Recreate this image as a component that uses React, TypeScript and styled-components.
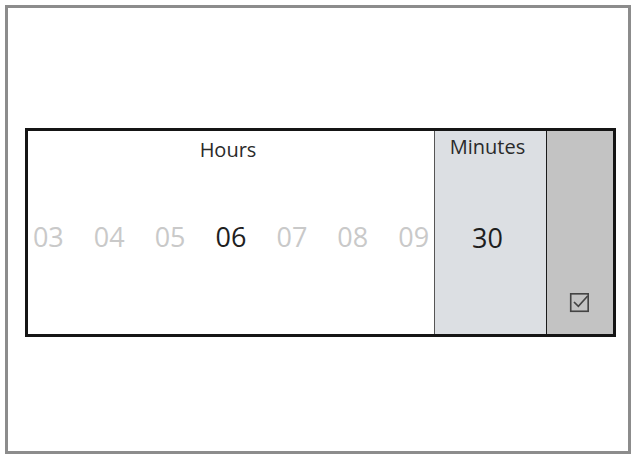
import styled, { createGlobalStyle } from "styled-components";

const GlobalStyle = createGlobalStyle`
    html, body {
        margin: 0;
        padding: 0;
        background: #ffffff;
        font-family: "Open Sans", "Noto Sans", sans-serif;
    }
`

const Frame = styled.div`
    box-sizing: border-box;
    margin: 5px 0 0 5px;
    width: 626px;
    height: 449px;
    border: 3px solid #8c8c8c;
    display: flex;
    align-items: flex-start;
    padding: 120px 12px 0 17px;
`

const Picker = styled.div`
    box-sizing: border-box;
    width: 591px;
    height: 209px;
    border: 3px solid #151515;
    display: flex;
    background: #ffffff;
`

const Column = styled.div<{ width: number, bg: string, divider?: string }>`
    box-sizing: border-box;
    width: ${props => props.width}px;
    flex: none;
    display: flex;
    flex-direction: column;
    align-items: center;
    background: ${props => props.bg};
    ${props => props.divider && `border-right: 1px solid ${props.divider};`}
`

const Label = styled.div<{ top: number }>`
    padding-top: ${props => props.top}px;
    padding-right: 6px;
    font-size: 20px;
    line-height: 24px;
    color: #2a2a2a;
`

const NumberRow = styled.div<{ top: number, shift?: number }>`
    margin-top: ${props => props.top}px;
    padding-right: ${props => props.shift || 0}px;
    display: flex;
    justify-content: center;
    gap: 30px;
`

const Num = styled.span<{ active?: boolean }>`
    font-size: 27px;
    line-height: 32px;
    color: ${props => props.active ? "#1e1e1e" : "#c9c9c9"};
`

const ConfirmColumn = styled.div`
    flex: 1;
    display: flex;
    justify-content: center;
    align-items: flex-end;
    padding-bottom: 20px;
    background: #c3c3c3;
`

const CheckIcon = () => (
    <svg width="24" height="24" viewBox="0 0 22 22" fill="none" stroke="#444" strokeWidth="1.5">
        <rect x="2.5" y="3.5" width="16" height="16" />
        <path d="M6 11.5 L9.5 15 L17.5 6" strokeLinecap="square" />
    </svg>
)

const hours = ["03", "04", "05", "06", "07", "08", "09"]

export default function App() {
    return (
        <>
            <GlobalStyle />
            <Frame>
                <Picker>
                    <Column width={407} bg="#ffffff" divider="#555555">
                        <Label top={7}>Hours</Label>
                        <NumberRow top={59}>
                            {hours.map(h => <Num key={h} active={h === "06"}>{h}</Num>)}
                        </NumberRow>
                    </Column>
                    <Column width={112} bg="#dcdfe3" divider="#1a1a1a">
                        <Label top={4}>Minutes</Label>
                        <NumberRow top={63} shift={6}>
                            <Num active>30</Num>
                        </NumberRow>
                    </Column>
                    <ConfirmColumn>
                        <CheckIcon />
                    </ConfirmColumn>
                </Picker>
            </Frame>
        </>
    )
}
